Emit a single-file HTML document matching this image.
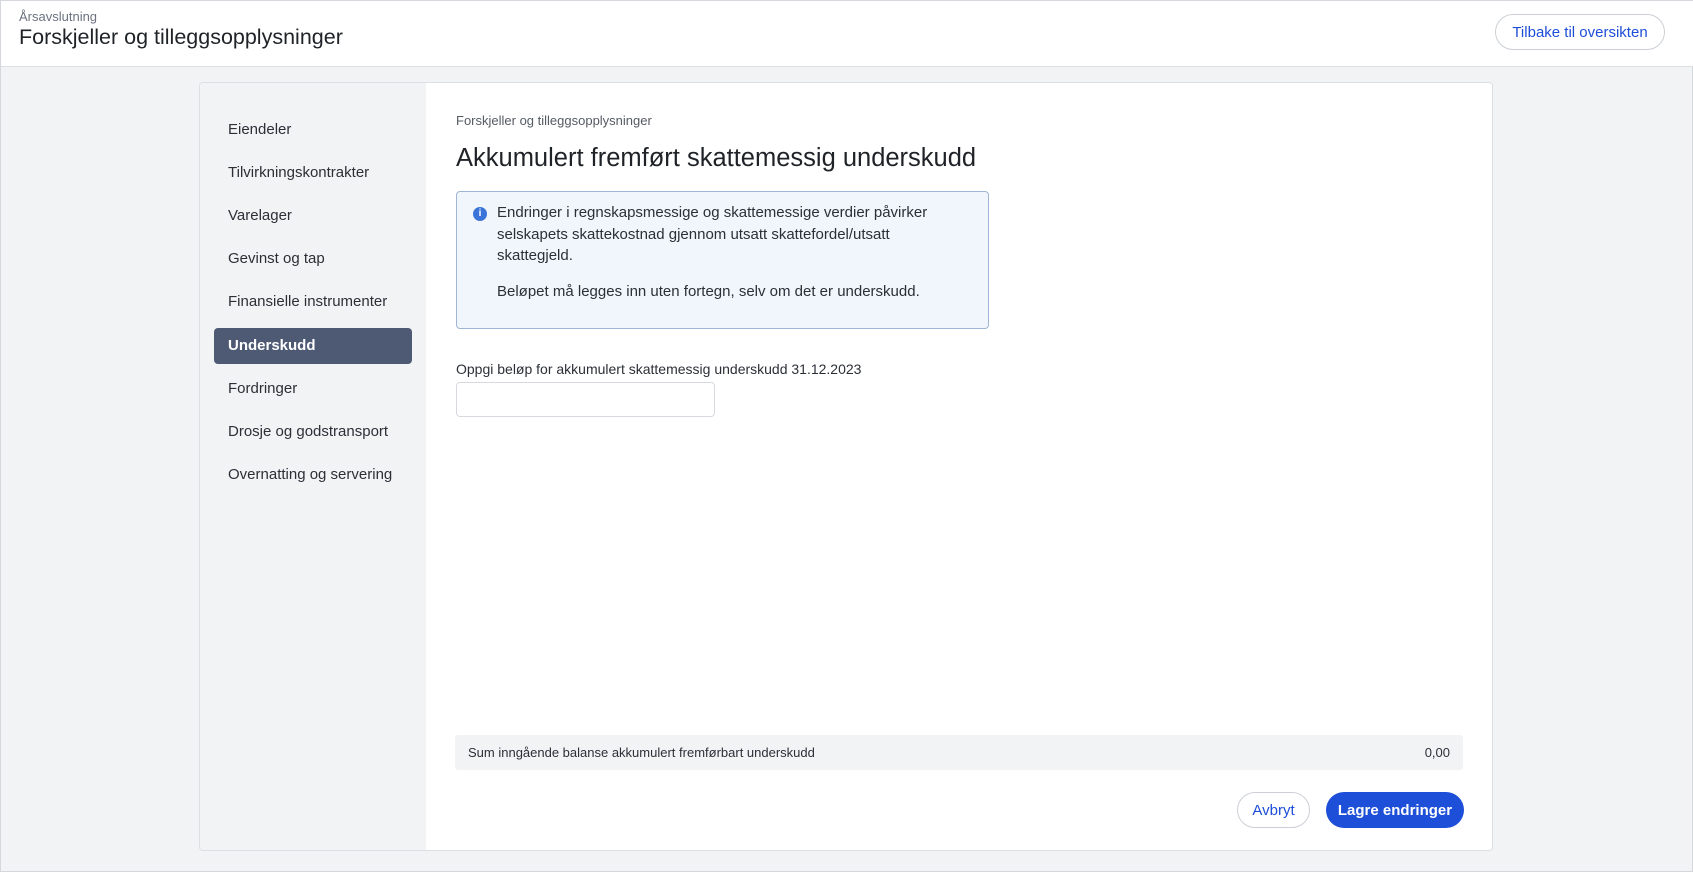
<!DOCTYPE html>
<html><head><meta charset="utf-8"><style>
*{box-sizing:border-box;margin:0;padding:0}
body{width:1693px;height:872px;background:#f2f3f5;font-family:"Liberation Sans",sans-serif;color:#1f2328;position:relative;overflow:hidden;border:1px solid #d4d7dc}
.hdr{position:absolute;left:0;top:0;width:1693px;height:66px;background:#fff;border-bottom:1px solid #dcdfe4}
.sub{position:absolute;left:18px;top:8px;font-size:13px;color:#6b7280}
.ttl{position:absolute;left:18px;top:24px;font-size:21.5px;color:#1f2328}
.back{position:absolute;left:1494px;top:13px;width:170px;height:36px;border:1px solid #ccd0d6;border-radius:18px;color:#1d4ed8;font-size:15px;display:flex;align-items:center;justify-content:center;background:#fff}
.card{position:absolute;left:198px;top:81px;width:1294px;height:769px;background:#fff;border:1px solid #dcdfe4;border-radius:4px;overflow:hidden}
.side{position:absolute;left:0;top:0;width:226px;height:100%;background:#f2f3f5}
.nav{position:absolute;left:14px;width:198px;height:36px;padding-left:14px;font-size:15px;color:#2b2f36;line-height:36px;border-radius:4px}
.nav.a{background:#4e5a74;color:#fff;font-weight:bold}
.main{position:absolute;left:256px;top:0}
.bc{position:absolute;left:0;top:30px;font-size:13px;color:#555b63;white-space:nowrap}
.h1{position:absolute;left:0;top:61px;font-size:25.5px;white-space:nowrap;color:#1f2328}
.info{position:absolute;left:0;top:108px;width:533px;height:138px;background:#f1f6fc;border:1px solid #9fb5d3;border-radius:4px;font-size:15px;line-height:21.5px;color:#2b2f36}
.info .i{position:absolute;left:16px;top:15px;width:14px;height:14px;border-radius:50%;background:#3b74d9;color:#fff;font-size:10px;font-weight:bold;text-align:center;line-height:14px}
.info .t{position:absolute;left:40px;top:10px;width:445px}
.lbl{position:absolute;left:0;top:278px;font-size:14px;white-space:nowrap;color:#2b2f36}
.inp{position:absolute;left:0;top:299px;width:259px;height:35px;border:1px solid #d6d9de;border-radius:4px}
.sum{position:absolute;left:454px;top:653px;width:1008px;height:35px;background:#f2f3f5;border-radius:3px;font-size:13px;line-height:35px;padding:0 13px;color:#2b2f36}
.sum span{float:right}
.btn{position:absolute;top:710px;height:36px;border-radius:18px;font-size:15px;display:flex;align-items:center;justify-content:center}
</style></head><body>
<div class="hdr"><div class="sub">Årsavslutning</div><div class="ttl">Forskjeller og tilleggsopplysninger</div><div class="back">Tilbake til oversikten</div></div>
<div class="card">
<div class="side">
<div class="nav" style="top:29px">Eiendeler</div>
<div class="nav" style="top:72px">Tilvirkningskontrakter</div>
<div class="nav" style="top:115px">Varelager</div>
<div class="nav" style="top:158px">Gevinst og tap</div>
<div class="nav" style="top:201px">Finansielle instrumenter</div>
<div class="nav a" style="top:245px">Underskudd</div>
<div class="nav" style="top:288px">Fordringer</div>
<div class="nav" style="top:331px">Drosje og godstransport</div>
<div class="nav" style="top:374px">Overnatting og servering</div>
</div>
<div class="main">
<div class="bc">Forskjeller og tilleggsopplysninger</div>
<div class="h1">Akkumulert fremført skattemessig underskudd</div>
<div class="info"><div class="i">i</div><div class="t">Endringer i regnskapsmessige og skattemessige verdier påvirker selskapets skattekostnad gjennom utsatt skattefordel/utsatt skattegjeld.<div style="height:14px"></div>Beløpet må legges inn uten fortegn, selv om det er underskudd.</div></div>
<div class="lbl">Oppgi beløp for akkumulert skattemessig underskudd 31.12.2023</div>
<div class="inp"></div>
</div>
</div>
<div class="sum" style="left:454px;top:734px">Sum inngående balanse akkumulert fremførbart underskudd<span>0,00</span></div>
<div class="btn" style="left:1236px;top:791px;width:73px;border:1px solid #ccd0d6;color:#1d4ed8;background:#fff">Avbryt</div>
<div class="btn" style="left:1325px;top:791px;width:138px;background:#1d4fd8;color:#fff;font-weight:bold">Lagre endringer</div>
</body></html>
